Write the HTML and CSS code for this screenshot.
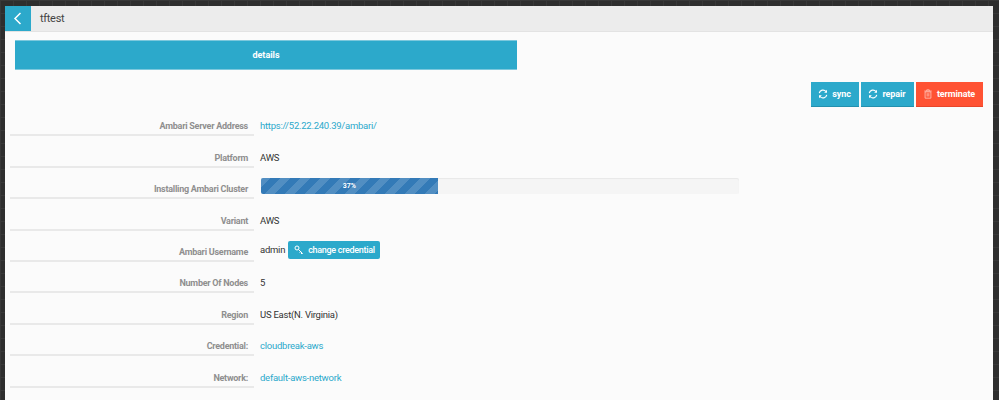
FILE: index.html
```html
<!DOCTYPE html>
<html lang="en">
<head>
   <meta charset="UTF-8">
   <meta name="viewport" content="width=device-width, initial-scale=1.0">
   <title>tftest</title>
   <link rel="stylesheet" href="styles.css">
</head>
<body>
   <div class="panel">
       <div class="panel-header">
           <a class="back-button" href="#">
               <svg width="9" height="13" viewBox="0 0 9 13"><path d="M7.5 1 2 6.5 7.5 12" fill="none" stroke="#fff" stroke-width="1.5"/></svg>
           </a>
           <div class="panel-title">tftest</div>
       </div>
       <div class="panel-body">
           <div class="tab-row">
               <div class="tab-active">details</div>
           </div>
           <div class="actions">
               <button class="btn btn-blue">
                   <svg class="btn-icon" viewBox="0 0 12 12"><path d="M1.5 5A4.6 4.6 0 0 1 9.6 3M10.5 7A4.6 4.6 0 0 1 2.4 9" fill="none" stroke="#fff" stroke-width="1.4"/><path d="M10.8 1v3.4H7.4zM1.2 11V7.6h3.4z" fill="#fff"/></svg>
                   sync
               </button>
               <button class="btn btn-blue">
                   <svg class="btn-icon" viewBox="0 0 12 12"><path d="M1.5 5A4.6 4.6 0 0 1 9.6 3M10.5 7A4.6 4.6 0 0 1 2.4 9" fill="none" stroke="#fff" stroke-width="1.4"/><path d="M10.8 1v3.4H7.4zM1.2 11V7.6h3.4z" fill="#fff"/></svg>
                   repair
               </button>
               <button class="btn btn-red">
                   <svg class="btn-icon" viewBox="0 0 12 12"><path d="M2.5 3.5h7v7.5h-7zM1.5 2.5h9M4.5 2.5V1h3v1.5M5 5v4M7 5v4" fill="none" stroke="#ffc4b8" stroke-width="1"/></svg>
                   terminate
               </button>
           </div>
           <div class="details">
               <div class="detail-row">
                   <div class="detail-label">Ambari Server Address</div>
                   <div class="detail-value"><a href="#">https://52.22.240.39/ambari/</a></div>
               </div>
               <div class="detail-row">
                   <div class="detail-label">Platform</div>
                   <div class="detail-value">AWS</div>
               </div>
               <div class="detail-row">
                   <div class="detail-label">Installing Ambari Cluster</div>
                   <div class="detail-value">
                       <div class="progress">
                           <div class="progress-bar" style="width: 37%">37%</div>
                       </div>
                   </div>
               </div>
               <div class="detail-row">
                   <div class="detail-label">Variant</div>
                   <div class="detail-value">AWS</div>
               </div>
               <div class="detail-row">
                   <div class="detail-label">Ambari Username</div>
                   <div class="detail-value">
                       admin
                       <button class="btn-small">
                           <svg class="key-icon" viewBox="0 0 12 12"><circle cx="3.6" cy="3.6" r="2.4" fill="none" stroke="#fff" stroke-width="1.2"/><path d="M5.4 5.4 10.5 10.5M8 8l-1.2 1.2M9.6 9.6l-1.2 1.2" fill="none" stroke="#fff" stroke-width="1.2"/></svg>
                           change credential
                       </button>
                   </div>
               </div>
               <div class="detail-row">
                   <div class="detail-label">Number Of Nodes</div>
                   <div class="detail-value">5</div>
               </div>
               <div class="detail-row">
                   <div class="detail-label">Region</div>
                   <div class="detail-value">US East(N. Virginia)</div>
               </div>
               <div class="detail-row">
                   <div class="detail-label">Credential:</div>
                   <div class="detail-value"><a href="#">cloudbreak-aws</a></div>
               </div>
               <div class="detail-row">
                   <div class="detail-label">Network:</div>
                   <div class="detail-value"><a href="#">default-aws-network</a></div>
               </div>
           </div>
       </div>
   </div>
</body>
</html>
```

FILE: styles.css
```css
body {
    margin: 0;
    height: 400px;
    overflow: hidden;
    background-color: #2e2e2e;
    background-image:
        linear-gradient(#383838 1px, transparent 1px),
        linear-gradient(90deg, #383838 1px, transparent 1px);
    background-size: 13px 13px;
    font-family: Roboto, "Liberation Sans", sans-serif;
    font-size: 9.5px;
    letter-spacing: -0.25px;
    color: #333;
}
a {
    color: #2ca9cb;
    text-decoration: none;
}
.panel {
    margin: 6px 6px 0 5px;
    height: 394px;
    background-color: #fbfbfb;
    overflow: hidden;
}
.panel-header {
    display: flex;
    align-items: center;
    height: 25px;
    background-color: #ececec;
    border-bottom: 1px solid #e3e3e3;
}
.back-button {
    display: flex;
    justify-content: center;
    align-items: center;
    width: 26px;
    height: 25px;
    padding-right: 1px;
    box-sizing: border-box;
    background-color: #2ca9cb;
}
.panel-title {
    margin-left: 9px;
    font-size: 11px;
    letter-spacing: -0.3px;
    color: #444;
}
.panel-body {
    padding: 8px 10px 0 5px;
}
.tab-row {
    padding-left: 5px;
}
.tab-active {
    width: 502px;
    height: 28px;
    line-height: 28px;
    text-align: center;
    background-color: #2ca9cb;
    color: #fff;
    font-weight: 700;
    font-size: 9px;
    letter-spacing: 0;
    border-top: 1px solid #7cc8dd;
    border-bottom: 1px solid #7cc8dd;
}
.actions {
    display: flex;
    justify-content: flex-end;
    gap: 2px;
    margin-top: 12px;
}
.btn {
    display: flex;
    align-items: center;
    justify-content: center;
    gap: 4px;
    height: 25px;
    border: none;
    padding: 0 1px 0 0;
    color: #fff;
    font-family: inherit;
    font-size: 9px;
    letter-spacing: -0.1px;
    font-weight: 700;
}
.btn-blue {
    width: 48px;
    background-color: #2ca9cb;
    border-bottom: 1px solid #2390ae;
}
.btn-blue + .btn-blue {
    width: 53px;
}
.btn-red {
    width: 67px;
    background-color: #ff5233;
    border-bottom: 1px solid #e8452a;
}
.btn-icon {
    width: 10px;
    height: 10px;
}
.details {
    margin-top: -2px;
}
.detail-row {
    display: flex;
    align-items: flex-end;
    height: 31.4px;
}
.detail-label {
    width: 244px;
    box-sizing: border-box;
    padding: 0 6px 1px 0;
    text-align: right;
    color: #8f8f8f;
    font-size: 9px;
    font-weight: 700;
    border-bottom: 2px solid #e9e9e9;
    line-height: 14px;
}
.detail-value {
    display: flex;
    align-items: center;
    gap: 3px;
    flex: 1;
    padding: 0 0 3px 6px;
    line-height: 14px;
}
.progress {
    width: 478px;
    height: 16px;
    margin: 0 0 2px 1px;
    background-color: #f5f5f5;
    border-radius: 2px;
    box-shadow: inset 0 1px 1px #e8e8e8;
    overflow: hidden;
}
.progress-bar {
    height: 100%;
    line-height: 16px;
    text-align: center;
    color: #fff;
    font-size: 7px;
    font-weight: 700;
    letter-spacing: 0;
    background-color: #337ab7;
    background-image: linear-gradient(135deg, rgba(255,255,255,.15) 25%, transparent 25%, transparent 50%, rgba(255,255,255,.15) 50%, rgba(255,255,255,.15) 75%, transparent 75%, transparent);
    background-size: 20px 20px;
}
.btn-small {
    display: flex;
    align-items: center;
    gap: 4px;
    height: 18px;
    padding: 0 5px 0 6px;
    border: none;
    border-radius: 2px;
    background-color: #2ca9cb;
    color: #fff;
    font-family: inherit;
    font-size: 9px;
    letter-spacing: -0.3px;
    font-weight: 500;
}
.key-icon {
    width: 10px;
    height: 10px;
}
```
